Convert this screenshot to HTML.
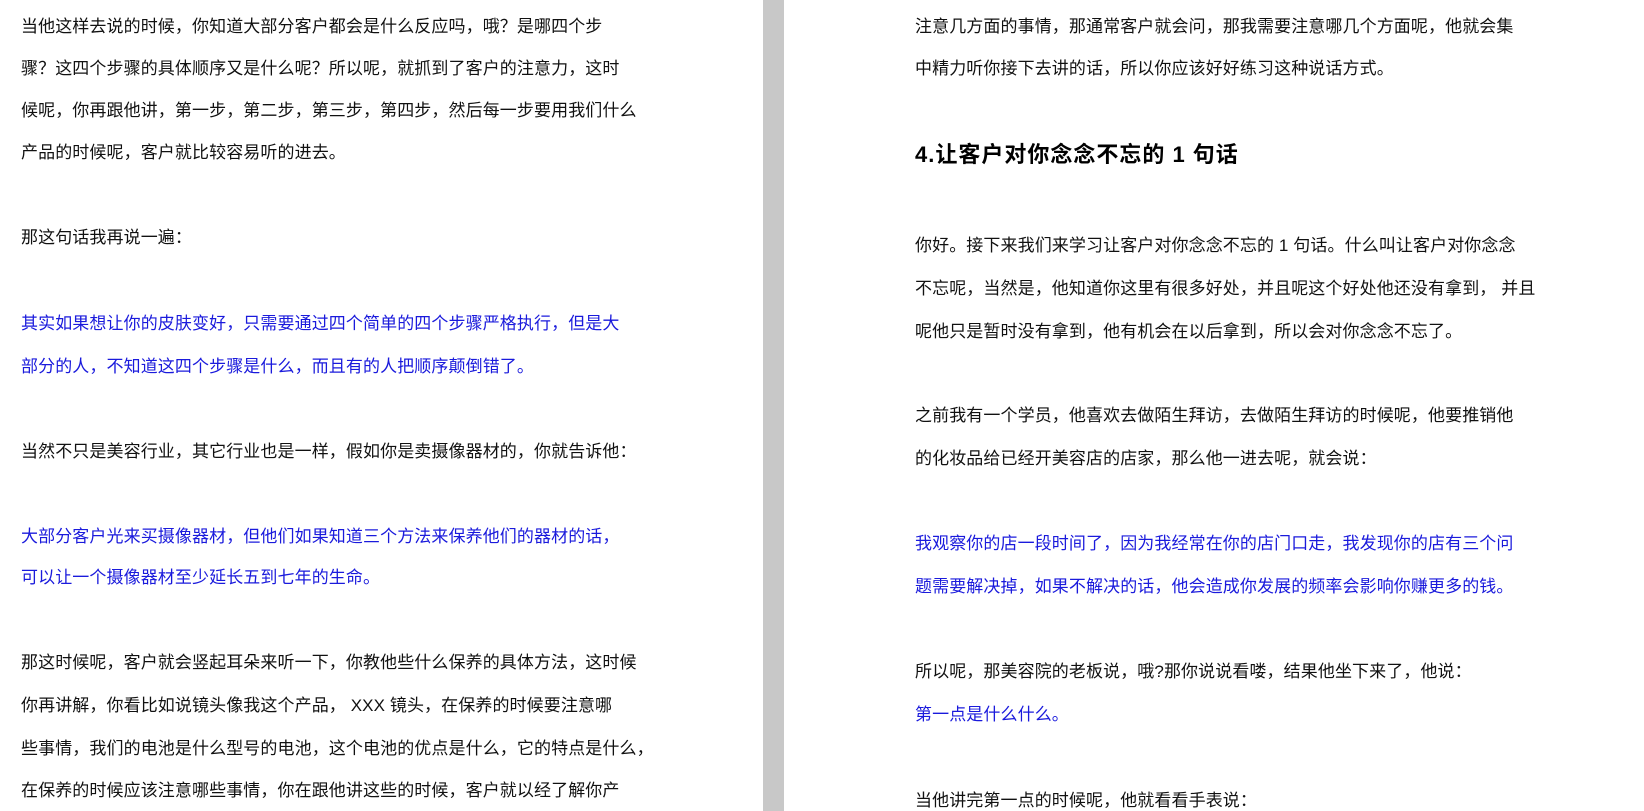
<!DOCTYPE html>
<html><head><meta charset="utf-8"><style>
html,body{margin:0;padding:0;background:#fff;width:1644px;height:811px;overflow:hidden;position:relative}
.t{position:absolute;white-space:nowrap;font-family:"Liberation Sans","Noto Sans CJK SC",sans-serif;font-size:17px;line-height:22px;height:22px;color:#111;letter-spacing:0.1px}
.b{color:#1a1adc}
.h{font-size:22px;font-weight:bold;line-height:26px;height:26px;color:#000;letter-spacing:1px}
.bar{position:absolute;left:763px;top:0;width:21px;height:811px;background:#c8c8c8}
</style></head><body>
<div class="bar"></div>
<div class="t" style="left:21px;top:16px">当他这样去说的时候，你知道大部分客户都会是什么反应吗，哦？是哪四个步</div>
<div class="t" style="left:21px;top:58px">骤？这四个步骤的具体顺序又是什么呢？所以呢，就抓到了客户的注意力，这时</div>
<div class="t" style="left:21px;top:100px">候呢，你再跟他讲，第一步，第二步，第三步，第四步，然后每一步要用我们什么</div>
<div class="t" style="left:21px;top:142px">产品的时候呢，客户就比较容易听的进去。</div>
<div class="t" style="left:21px;top:227px">那这句话我再说一遍：</div>
<div class="t b" style="left:21px;top:313px">其实如果想让你的皮肤变好，只需要通过四个简单的四个步骤严格执行，但是大</div>
<div class="t b" style="left:21px;top:356px">部分的人，不知道这四个步骤是什么，而且有的人把顺序颠倒错了。</div>
<div class="t" style="left:21px;top:441px">当然不只是美容行业，其它行业也是一样，假如你是卖摄像器材的，你就告诉他：</div>
<div class="t b" style="left:21px;top:526px">大部分客户光来买摄像器材，但他们如果知道三个方法来保养他们的器材的话，</div>
<div class="t b" style="left:21px;top:567px">可以让一个摄像器材至少延长五到七年的生命。</div>
<div class="t" style="left:21px;top:652px">那这时候呢，客户就会竖起耳朵来听一下，你教他些什么保养的具体方法，这时候</div>
<div class="t" style="left:21px;top:695px">你再讲解，你看比如说镜头像我这个产品， XXX 镜头，在保养的时候要注意哪</div>
<div class="t" style="left:21px;top:738px">些事情，我们的电池是什么型号的电池，这个电池的优点是什么，它的特点是什么，</div>
<div class="t" style="left:21px;top:780px">在保养的时候应该注意哪些事情，你在跟他讲这些的时候，客户就以经了解你产</div>

<div class="t" style="left:915px;top:16px">注意几方面的事情，那通常客户就会问，那我需要注意哪几个方面呢，他就会集</div>
<div class="t" style="left:915px;top:58px">中精力听你接下去讲的话，所以你应该好好练习这种说话方式。</div>
<div class="t h" style="left:915px;top:142px">4.让客户对你念念不忘的 1 句话</div>
<div class="t" style="left:915px;top:235px">你好。接下来我们来学习让客户对你念念不忘的 1 句话。什么叫让客户对你念念</div>
<div class="t" style="left:915px;top:278px">不忘呢，当然是，他知道你这里有很多好处，并且呢这个好处他还没有拿到， 并且</div>
<div class="t" style="left:915px;top:321px">呢他只是暂时没有拿到，他有机会在以后拿到，所以会对你念念不忘了。</div>
<div class="t" style="left:915px;top:405px">之前我有一个学员，他喜欢去做陌生拜访，去做陌生拜访的时候呢，他要推销他</div>
<div class="t" style="left:915px;top:448px">的化妆品给已经开美容店的店家，那么他一进去呢，就会说：</div>
<div class="t b" style="left:915px;top:533px">我观察你的店一段时间了，因为我经常在你的店门口走，我发现你的店有三个问</div>
<div class="t b" style="left:915px;top:576px">题需要解决掉，如果不解决的话，他会造成你发展的频率会影响你赚更多的钱。</div>
<div class="t" style="left:915px;top:661px">所以呢，那美容院的老板说，哦?那你说说看喽，结果他坐下来了，他说：</div>
<div class="t b" style="left:915px;top:704px">第一点是什么什么。</div>
<div class="t" style="left:915px;top:790px">当他讲完第一点的时候呢，他就看看手表说：</div>
</body></html>
